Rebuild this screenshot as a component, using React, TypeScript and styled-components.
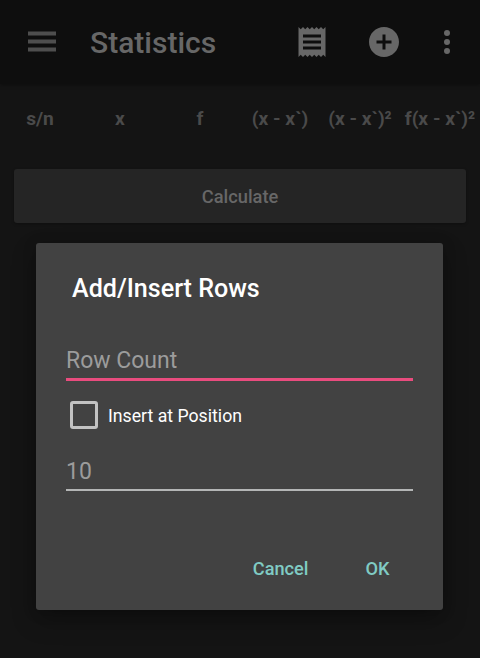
import React from "react";
import styled, { createGlobalStyle } from "styled-components";

const GlobalStyle = createGlobalStyle`
  * { box-sizing: border-box; }
  body { margin: 0; background: #141414; font-family: Roboto, sans-serif; }
  button, input { font-family: inherit; }
`;

const Screen = styled.div`
  position: relative;
  width: 480px;
  height: 658px;
  overflow: hidden;
  background: #141414;
`;

const Toolbar = styled.header`
  display: flex;
  align-items: center;
  height: 84px;
  padding: 0 15px 0 24px;
  background: #0e0e0e;
  box-shadow: 0 1px 4px rgba(0, 0, 0, 0.4);
  color: #676767;
`;

const IconButton = styled.button<{ $width: number; $gap?: number }>`
  display: flex;
  justify-content: center;
  width: ${(p) => p.$width}px;
  margin: 0 0 0 ${(p) => p.$gap ?? 0}px;
  padding: 0;
  border: 0;
  background: none;
  color: inherit;

  svg { display: block; flex: none; fill: currentColor; }
`;

const Title = styled.h1`
  flex: 1;
  margin: 2px 0 0 30px;
  font-size: 30px;
  line-height: 36px;
  font-weight: 500;
`;

const ColumnHeads = styled.div`
  display: grid;
  grid-template-columns: repeat(6, 80px);
  padding-top: 23px;
  height: 85px;
`;

const ColumnHead = styled.span`
  text-align: center;
  white-space: nowrap;
  font-size: 19.2px;
  line-height: 24px;
  font-weight: 700;
  color: #4a4a4a;
`;

const CalculateButton = styled.button`
  display: block;
  width: 452px;
  height: 54px;
  margin: 0 14px;
  padding: 0;
  border: 0;
  border-radius: 3px;
  background: #252525;
  box-shadow: 0 1px 3px rgba(0, 0, 0, 0.3);
  color: #676767;
  font-size: 18.3px;
  font-weight: 500;
`;

const Overlay = styled.div`
  position: absolute;
  inset: 0;
  display: flex;
  align-items: flex-start;
  padding: 243px 37px 0 36px;
`;

const Dialog = styled.section`
  display: flex;
  flex-direction: column;
  width: 407px;
  height: 367px;
  padding: 30px 30px 0;
  border-radius: 3px;
  background: #424242;
  box-shadow: 0 10px 24px rgba(0, 0, 0, 0.25), 0 2px 14px rgba(0, 0, 0, 0.2);
`;

const DialogTitle = styled.h2`
  margin: 0 0 0 6px;
  font-size: 25.1px;
  line-height: 32px;
  font-weight: 500;
  color: #fff;
`;

const Field = styled.input<{ $active?: boolean; $top: number }>`
  flex: none;
  width: 347px;
  height: ${(p) => (p.$active ? 38 : 37)}px;
  margin: ${(p) => p.$top}px 0 0;
  padding: 0;
  border: 0;
  border-bottom: ${(p) => (p.$active ? "3px solid #e94c7e" : "2px solid #b4b6b6")};
  border-radius: 0;
  outline: 0;
  background: none;
  color: #fff;
  font-size: 23px;
  line-height: 28px;

  &::placeholder { color: #9c9c9c; opacity: 1; }
`;

const CheckRow = styled.label`
  display: flex;
  align-items: center;
  gap: 10px;
  height: 28px;
  margin: 20px 0 0 4px;
  font-size: 17.7px;
  line-height: 28px;
  color: #fff;
`;

const CheckLabel = styled.span`
  padding-top: 2px;
`;

const CheckBox = styled.input`
  appearance: none;
  width: 28px;
  height: 28px;
  margin: 0;
  border: 3px solid #c2c2c2;
  border-radius: 3px;
`;

const Actions = styled.footer`
  display: flex;
  justify-content: flex-end;
  gap: 57px;
  margin: 64px 23.5px 0 0;
`;

const ActionButton = styled.button`
  padding: 0;
  border: 0;
  background: none;
  color: #80cbc4;
  font-size: 18.2px;
  line-height: 28px;
  font-weight: 500;
`;

const heads = ["s/n", "x", "f", "(x - x`)", "(x - x`)²", "f(x - x`)²"];

export default function App() {
  return (
    <Screen>
      <GlobalStyle />
      <Toolbar>
        <IconButton $width={36} aria-label="Menu">
          <svg width="28" height="22" viewBox="0 0 28 22">
            <path fill="#4e4e4e" d="M0 .6h28v3.8H0zM0 8.6h28v3.8H0zM0 16.6h28v3.8H0z" />
          </svg>
        </IconButton>
        <Title>Statistics</Title>
        <IconButton $width={36} aria-label="Receipt">
          <svg width="36" height="36" viewBox="0 0 24 24">
            <path d="M18 17H6v-2h12v2zm0-4H6v-2h12v2zm0-4H6V7h12v2zM3 22l1.5-1.5L6 22l1.5-1.5L9 22l1.5-1.5L12 22l1.5-1.5L15 22l1.5-1.5L18 22l1.5-1.5L21 22V2l-1.5 1.5L18 2l-1.5 1.5L15 2l-1.5 1.5L12 2l-1.5 1.5L9 2 7.5 3.5 6 2 4.5 3.5 3 2v20z" />
          </svg>
        </IconButton>
        <IconButton $width={36} $gap={36} aria-label="Add">
          <svg width="36" height="36" viewBox="0 0 24 24">
            <path d="M12 2C6.48 2 2 6.48 2 12s4.48 10 10 10 10-4.48 10-10S17.52 2 12 2zm5 11h-4v4h-2v-4H7v-2h4V7h2v4h4v2z" />
          </svg>
        </IconButton>
        <IconButton $width={36} $gap={27} aria-label="More">
          <svg width="36" height="36" viewBox="0 0 24 24">
            <circle cx="12" cy="6" r="2" />
            <circle cx="12" cy="12" r="2" />
            <circle cx="12" cy="18" r="2" />
          </svg>
        </IconButton>
      </Toolbar>
      <ColumnHeads>
        {heads.map((h) => (
          <ColumnHead key={h}>{h}</ColumnHead>
        ))}
      </ColumnHeads>
      <CalculateButton>Calculate</CalculateButton>
      <Overlay>
        <Dialog role="dialog">
          <DialogTitle>Add/Insert Rows</DialogTitle>
          <Field $active $top={38} placeholder="Row Count" />
          <CheckRow>
            <CheckBox type="checkbox" />
            <CheckLabel>Insert at Position</CheckLabel>
          </CheckRow>
          <Field $top={25} placeholder="10" />
          <Actions>
            <ActionButton>Cancel</ActionButton>
            <ActionButton>OK</ActionButton>
          </Actions>
        </Dialog>
      </Overlay>
    </Screen>
  );
}
